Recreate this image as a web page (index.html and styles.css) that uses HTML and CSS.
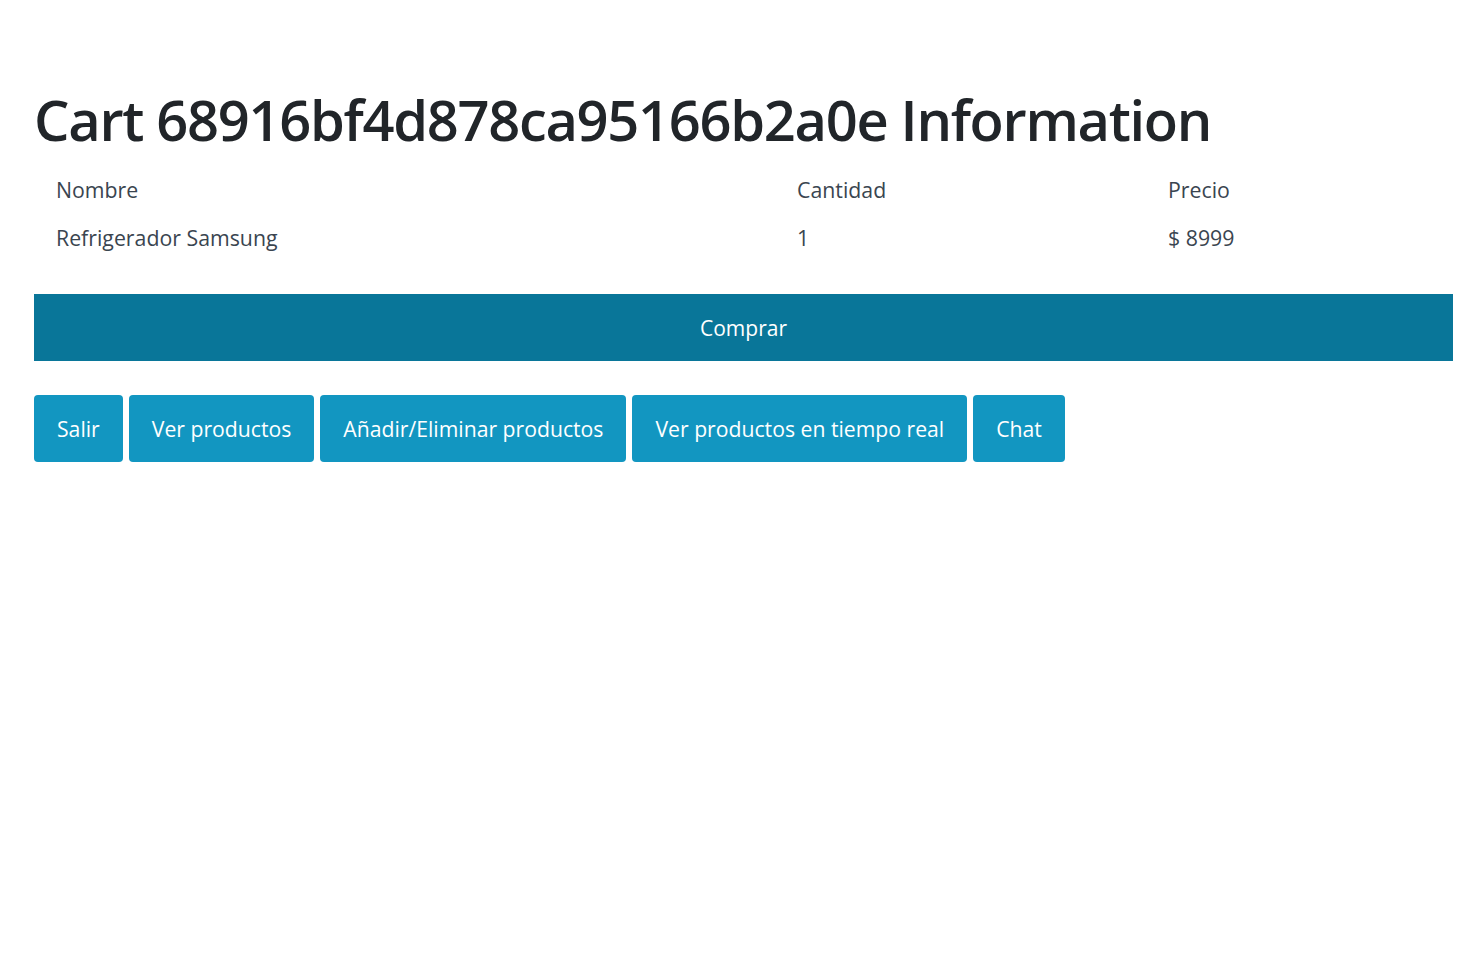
FILE: index.html
```html
<!DOCTYPE html>
<html lang="es">
<head>
<meta charset="utf-8">
<title>Cart</title>
<link rel="stylesheet" href="styles.css">
</head>
<body>
<main class="container">
  <h1 class="title">Cart 68916bf4d878ca95166b2a0e Information</h1>
  <table class="cart">
    <thead>
      <tr><th class="c-name">Nombre</th><th class="c-qty">Cantidad</th><th class="c-price">Precio</th></tr>
    </thead>
    <tbody>
      <tr><td>Refrigerador Samsung</td><td>1</td><td>$ 8999</td></tr>
    </tbody>
  </table>
  <button class="buy">Comprar</button>
  <nav class="actions">
    <button class="btn">Salir</button>
    <button class="btn">Ver productos</button>
    <button class="btn">Añadir/Eliminar productos</button>
    <button class="btn">Ver productos en tiempo real</button>
    <button class="btn">Chat</button>
  </nav>
</main>
</body>
</html>
```
FILE: styles.css
```css
* { box-sizing: border-box; }
html, body { margin: 0; padding: 0; background: #fff; }
body {
  font-family: "Open Sans", "DejaVu Sans", sans-serif;
  color: #333;
}
.container {
  padding: 86px 22px 0 34px;
}
.title {
  margin: 0 0 22px 0;
  font-size: 56px;
  font-weight: 600;
  line-height: 1.2;
  color: #212529;
  letter-spacing: -1.3px;
}
.cart {
  width: 100%;
  border-collapse: collapse;
  font-size: 21.3px;
  color: #3a4550;
}
.cart th, .cart td {
  text-align: left;
  font-weight: 400;
  padding: 0 22px;
  height: 48px;
  vertical-align: top;
}
.c-name { width: 741px; }
.c-qty { width: 371px; }
.buy {
  display: block;
  width: 100%;
  margin-top: 23px;
  height: 67px;
  border: 0;
  border-radius: 0;
  background: #097699;
  color: #fff;
  font-family: inherit;
  font-size: 21px;
}
.actions {
  display: flex;
  gap: 6px;
  margin-top: 34px;
}
.btn {
  height: 67px;
  padding: 0 23px;
  border: 0;
  border-radius: 4px;
  background: #1296c1;
  color: #fff;
  font-family: inherit;
  font-size: 21.2px;
}
```
